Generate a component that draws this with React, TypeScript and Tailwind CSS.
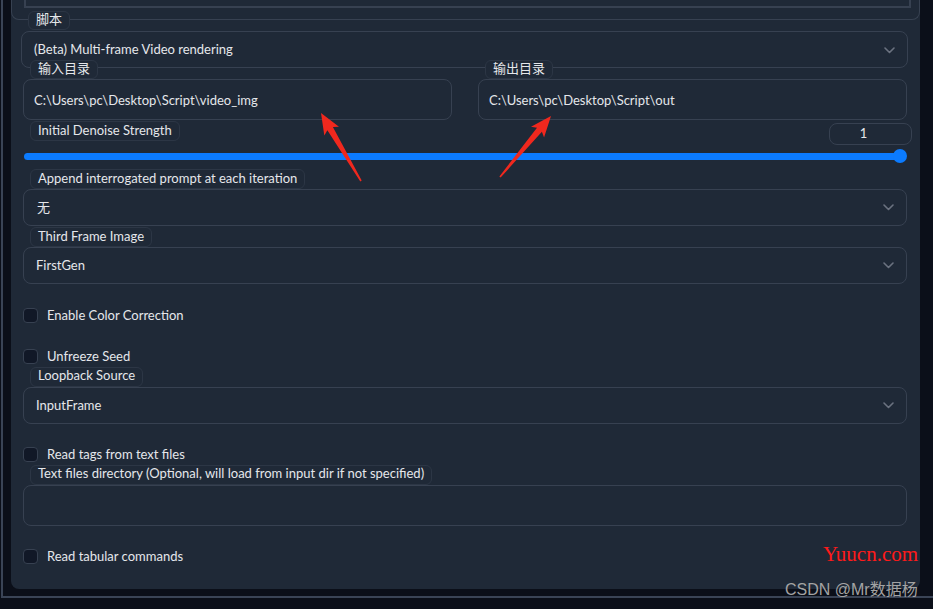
import React from 'react';

const FONT = { fontFamily: 'Lato, "Noto Sans CJK SC", sans-serif' };

function Chevron() {
  return (
    <svg width="11" height="7" viewBox="0 0 11 7" className="shrink-0">
      <polyline points="1,1 5.5,5.5 10,1" fill="none" stroke="#6b7280" strokeWidth="1.6" strokeLinecap="round" strokeLinejoin="round" />
    </svg>
  );
}

function Label({ text, short = false, className = '' }: { text: string; short?: boolean; className?: string }) {
  return (
    <div
      className={`relative z-10 ml-[7px] self-start ${short ? 'h-[19px]' : 'h-[20px]'} px-[7px] pb-[2px] flex items-center rounded-md border border-[#2c3645] bg-[#1f2937] text-[13px] text-[#e5e7eb] leading-none ${className}`}
    >
      {text}
    </div>
  );
}

function Dropdown({ value, className = '' }: { value: string; className?: string }) {
  return (
    <div className={`h-[37px] flex items-center justify-between pl-[12px] pr-[12px] rounded-lg border border-[#374151] text-[13px] text-[#e5e7eb] ${className}`}>
      <span>{value}</span>
      <Chevron />
    </div>
  );
}

function TextBox({ value = '' }: { value?: string }) {
  return (
    <div className="h-[41px] flex items-center px-[10px] pt-[2px] rounded-lg border border-[#374151] text-[13px] text-[#e5e7eb]">
      {value}
    </div>
  );
}

function Check({ text, className = '' }: { text: string; className?: string }) {
  return (
    <div className={`flex items-center h-[15px] gap-[9px] ${className}`}>
      <div className="w-[15px] h-[15px] rounded-[4px] border border-[#374151] bg-[#111827]" />
      <span className="text-[13px] text-[#e5e7eb]">{text}</span>
    </div>
  );
}

function arrowPoints(x1: number, y1: number, x2: number, y2: number) {
  const L = Math.hypot(x2 - x1, y2 - y1);
  const ux = (x2 - x1) / L;
  const uy = (y2 - y1) / L;
  const nx = -uy;
  const ny = ux;
  const head = 21;
  const at = (d: number, w: number) => `${x1 + ux * d + nx * w},${y1 + uy * d + ny * w}`;
  return [
    at(0, 0.8),
    at(L - head + 3, 3.2),
    at(L - head, 8.5),
    at(L, 0),
    at(L - head, -8.5),
    at(L - head + 3, -3.2),
    at(0, -0.8),
  ].join(' ');
}

export default function App() {
  return (
    <div className="relative w-[933px] h-[609px] overflow-hidden bg-[#0b0f19]" style={FONT}>
      {/* outer frame */}
      <div className="ml-[1px] w-[960px] h-[598px] border-l-2 border-b-2 border-[#3a4456] pl-[8px] pb-[7px]">
        {/* panel */}
        <div className="w-[909px] h-[589px] bg-[#1f2937] rounded-b-lg flex flex-col">
          {/* previous block */}
          <div className="h-[20px] shrink-0 border border-t-0 border-[#374151] rounded-b-lg">
            <div className="ml-[12px] mr-[8px] h-[8px] border-2 border-t-0 border-[#374151]" />
          </div>

          {/* script select */}
          <div className="flex flex-col px-[10px] mr-[2px]">
            <Label text="脚本" short className="-mt-[9px]" />
            <Dropdown value="(Beta) Multi-frame Video rendering" className="mt-[1px] pt-[1px]" />
          </div>

          <div className="flex flex-col pl-[12px] pr-[13px]">
            {/* directories */}
            <div className="grid grid-cols-2 gap-[26px] -mt-[8px]">
              <div className="flex flex-col">
                <Label text="输入目录" short />
                <TextBox value="C:\Users\pc\Desktop\Script\video_img" />
              </div>
              <div className="flex flex-col">
                <Label text="输出目录" short />
                <TextBox value="C:\Users\pc\Desktop\Script\out" />
              </div>
            </div>

            {/* slider */}
            <div className="mt-[1px] flex justify-between">
              <Label text="Initial Denoise Strength" />
              <div className="mt-[2px] -mr-[5px] w-[83px] h-[22px] pr-[14px] rounded-lg border border-[#374151] flex items-center justify-center text-[13px] text-[#e5e7eb]">
                1
              </div>
            </div>
            <div className="relative mt-[4px] ml-[1px] h-[14px] flex items-center">
              <div className="flex-1 h-[7px] mr-[7px] rounded-full bg-[#0b7bff]" />
              <div className="absolute right-0 top-0 w-[14px] h-[14px] rounded-full bg-[#0b7bff]" />
            </div>

            <Label text="Append interrogated prompt at each iteration" className="mt-[6px]" />
            <Dropdown value="无" className="pl-[13px]" />

            <Label text="Third Frame Image" className="mt-[1px]" />
            <Dropdown value="FirstGen" />

            <Check text="Enable Color Correction" className="mt-[24px]" />
            <Check text="Unfreeze Seed" className="mt-[26px]" />

            <Label text="Loopback Source" className="mt-[3px] pb-[3px]" />
            <Dropdown value="InputFrame" />

            <Check text="Read tags from text files" className="mt-[23px]" />
            <Label text="Text files directory (Optional, will load from input dir if not specified)" className="mt-[3px] pb-[3px]" />
            <TextBox />

            <Check text="Read tabular commands" className="mt-[23px]" />
          </div>
        </div>
      </div>

      {/* annotation arrows */}
      <svg className="absolute inset-0 pointer-events-none" width="933" height="609">
        <polygon points={arrowPoints(361, 181, 321, 113)} fill="#f0281e" />
        <polygon points={arrowPoints(500, 177, 551, 116)} fill="#f0281e" />
      </svg>

      {/* watermarks */}
      <div
        className="absolute left-[823px] top-[544px] text-[21px] leading-none text-[#ff1a1a]"
        style={{ fontFamily: '"Liberation Serif", serif' }}
      >
        Yuucn.com
      </div>
      <div
        className="absolute left-[785px] top-[582px] text-[16px] leading-none text-[#a3a3a3]"
        style={{ fontFamily: '"Liberation Sans", "Noto Sans CJK SC", sans-serif' }}
      >
        CSDN @Mr数据杨
      </div>
    </div>
  );
}
